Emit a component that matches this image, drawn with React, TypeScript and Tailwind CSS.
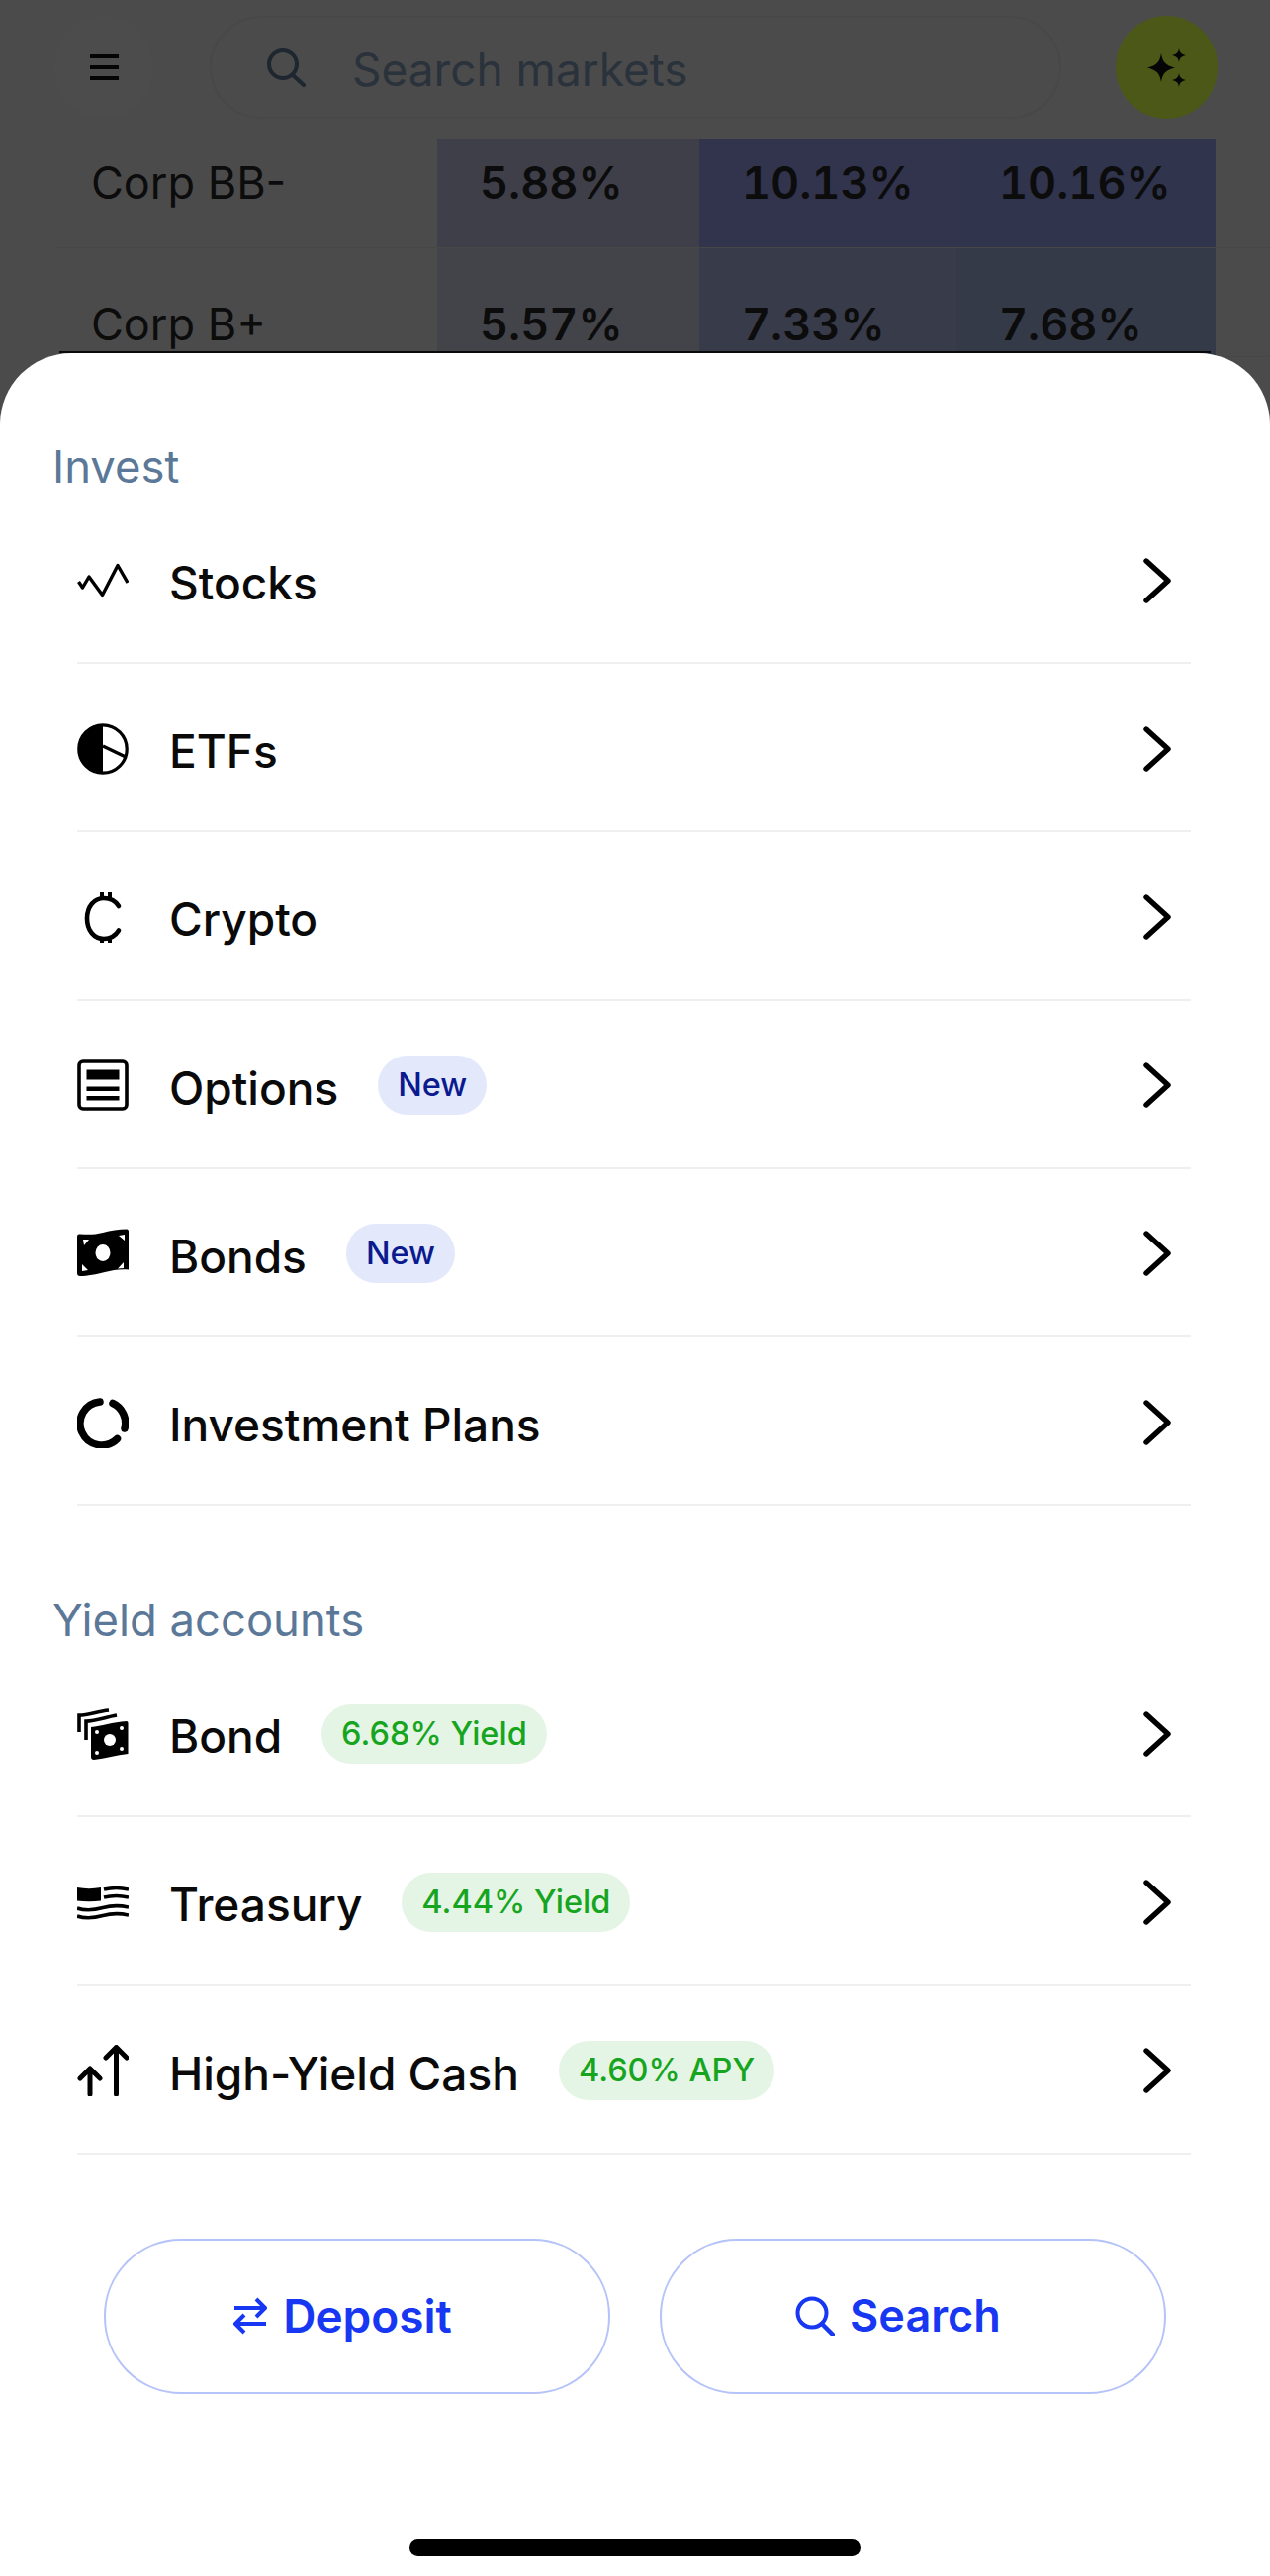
import type { ReactNode } from 'react';

type MenuRow = {
	label: string;
	icon: ReactNode;
	badge?: string;
	tone?: 'blue' | 'green';
};

function Icon({ children }: { children: ReactNode }) {
	return (
		<svg viewBox="0 0 52 52" className="h-[52px] w-[52px] shrink-0">
			{children}
		</svg>
	);
}

const stocksIcon = (
	<Icon>
		<polyline
			points="1.5,27 5.5,33 12,22 25.5,40.5 41,10.5 51,28"
			fill="none"
			stroke="#000"
			strokeWidth="3.4"
			strokeLinejoin="round"
		/>
	</Icon>
);

const etfsIcon = (
	<Icon>
		<circle cx="26" cy="26" r="24.2" fill="#fff" stroke="#000" strokeWidth="3.2" />
		<path d="M26 1.5a24.5 24.5 0 0 0 0 49Z" fill="#000" />
		<path d="M26 23 49 34" stroke="#000" strokeWidth="3.4" />
	</Icon>
);

const cryptoIcon = (
	<Icon>
		<path
			d="M42 15C38 8.5 33 7 27 7 17 7 10 15.5 10 27.5S17 48 27 48c6 0 11-2 15-8.5"
			fill="none"
			stroke="#000"
			strokeWidth="4.6"
			strokeLinecap="round"
		/>
		<path d="M25 1v6M33 1v6M25 48v6M33 48v6" stroke="#000" strokeWidth="4" />
	</Icon>
);

const optionsIcon = (
	<Icon>
		<rect x="2" y="2" width="48" height="48" rx="4" fill="none" stroke="#000" strokeWidth="3.6" />
		<rect x="9.5" y="10.5" width="33" height="10" fill="#000" />
		<rect x="9.5" y="27.5" width="33" height="4.5" fill="#000" />
		<rect x="9.5" y="37" width="33" height="4.5" fill="#000" />
	</Icon>
);

const bondsIcon = (
	<Icon>
		<path
			d="M0 9C0 7 1 6.500 3 6.500 12 7 18 7 26 5S42 1.500 50 1.500C51.500 1.500 52 2.500 52 4V42.500C44 41.500 36 43 28 45S10 49 3 49C1 49 0 48 0 46Z"
			fill="#000"
		/>
		<ellipse cx="26" cy="25.500" rx="7.500" ry="8.500" fill="#fff" />
		<path d="M6 12h6l-5 6ZM42 8l6-1v6ZM5 37l6 6-6 1ZM47 35v6l-6 .5Z" fill="#fff" />
	</Icon>
);

const plansIcon = (
	<Icon>
		<path
			d="M23 5A22 22 0 1 0 40.500 42.500"
			fill="none"
			stroke="#000"
			strokeWidth="7.500"
			strokeLinecap="round"
		/>
		<path d="M36 6.500A22 22 0 0 1 48 32" fill="none" stroke="#000" strokeWidth="7.500" strokeLinecap="round" />
	</Icon>
);

const stackedBondIcon = (
	<Icon>
		<path d="M2 24V7C12 7 20 3 32 2" fill="none" stroke="#000" strokeWidth="3.600" />
		<path d="M9 32V13C19 13 28 9 40 7" fill="none" stroke="#000" strokeWidth="3.600" />
		<path d="M14 19C24 18 36 14 50 13 51 13 51.500 14 51.500 15V46C40 47 28 51 17 52 15 52 14 51 14 49Z" fill="#000" />
		<circle cx="33" cy="32" r="6" fill="#fff" />
		<circle cx="20" cy="24" r="2" fill="#fff" />
		<circle cx="45" cy="20" r="2" fill="#fff" />
		<circle cx="20" cy="45" r="2" fill="#fff" />
		<circle cx="45" cy="41" r="2" fill="#fff" />
	</Icon>
);

const treasuryIcon = (
	<Icon>
		<path d="M0 11c8 1.500 16 1.500 24 0v13.500c-8 1-16 1-24 0Z" fill="#000" />
		<path
			d="M27 13c8-2 17-2 25 0M27 21c8-2 17-2 25 0M0 32c9 3 17 2 26-.5s17-2.500 26-.5M0 40c9 3 17 2 26-.5s17-2.500 26-.5"
			fill="none"
			stroke="#000"
			strokeWidth="3.600"
		/>
	</Icon>
);

const arrowsIcon = (
	<Icon>
		<path
			d="M13 50V25M3 34 13 24 23 34M39.500 50V3M29 13 39.500 2.500 50 13"
			fill="none"
			stroke="#000"
			strokeWidth="5"
			strokeLinecap="round"
			strokeLinejoin="round"
		/>
	</Icon>
);

const investRows: MenuRow[] = [
	{ label: 'Stocks', icon: stocksIcon },
	{ label: 'ETFs', icon: etfsIcon },
	{ label: 'Crypto', icon: cryptoIcon },
	{ label: 'Options', icon: optionsIcon, badge: 'New', tone: 'blue' },
	{ label: 'Bonds', icon: bondsIcon, badge: 'New', tone: 'blue' },
	{ label: 'Investment Plans', icon: plansIcon },
];

const yieldRows: MenuRow[] = [
	{ label: 'Bond', icon: stackedBondIcon, badge: '6.68% Yield', tone: 'green' },
	{ label: 'Treasury', icon: treasuryIcon, badge: '4.44% Yield', tone: 'green' },
	{ label: 'High-Yield Cash', icon: arrowsIcon, badge: '4.60% APY', tone: 'green' },
];

function Row({ label, icon, badge, tone }: MenuRow) {
	return (
		<div className="flex h-[170.2px] items-center border-b-2 border-[#efefef] pt-[3px]">
			<div className="mr-[41px]">{icon}</div>
			<span className="mt-[5px] text-[46px] leading-[52px] font-medium text-[#0a0a0a]">
				{label}
			</span>
			{badge && (
				<span
					className={
						tone === 'blue'
							? 'ml-[40px] rounded-full bg-[#e3e9fb] px-[20px] text-[32.5px] leading-[60px] font-medium text-[#0b1a8e]'
							: 'ml-[40px] rounded-full bg-[#e5f5e5] px-[20px] text-[32.5px] leading-[60px] font-medium text-[#17a51f]'
					}
				>
					{badge}
				</span>
			)}
			<svg viewBox="0 0 28 46" fill="none" className="mr-[20px] ml-auto h-[46px] w-[28px]">
				<path d="M3 3l22 20-22 20" stroke="#000" strokeWidth="5.400" strokeLinecap="round" strokeLinejoin="round" />
			</svg>
		</div>
	);
}

function MarketRow({
	name,
	values,
	fills,
	height,
	padding,
}: {
	name: string;
	values: string[];
	fills: string[];
	height: string;
	padding: string;
}) {
	return (
		<div className={`ml-[55px] flex ${height} border-b border-[#474747]`}>
			<div className={`w-[387px] pl-[37px] text-[45px] leading-[50px] text-[#0c0c0c] ${padding}`}>
				{name}
			</div>
			{values.map((value, i) => (
				<div
					key={value}
					className={`pl-[43px] text-[45px] leading-[50px] font-semibold text-[#0c0c0c] tabular-nums ${padding} ${i === 2 ? 'w-[262px]' : i === 0 ? 'w-[265px]' : 'w-[260px]'}`}
					style={{ backgroundColor: fills[i] }}
				>
					{value}
				</div>
			))}
		</div>
	);
}

function App() {
	return (
		<div className="relative h-[2604px] w-[1284px] overflow-hidden bg-[#4b4b4b] font-['Inter',sans-serif]">
			<header className="flex h-[141px] items-start pt-[16px] pr-[53px] pl-[55px]">
				<div className="flex h-[104px] w-[100px] items-center justify-center rounded-full bg-[#4c4c4c]">
					<svg viewBox="0 0 29 26" className="h-[26px] w-[29px]">
						<path d="M0 2h29M0 13h29M0 24h29" stroke="#050505" strokeWidth="4" />
					</svg>
				</div>
				<div className="ml-[57px] flex h-[104px] w-[861px] items-center rounded-full border-2 border-[#484848]">
					<svg viewBox="0 0 40 40" fill="none" className="ml-[55px] h-[40px] w-[40px]">
						<circle cx="17" cy="17" r="14" stroke="#1e2630" strokeWidth="4" />
						<path d="M27 28l11 10" stroke="#1e2630" strokeWidth="4" strokeLinecap="round" />
					</svg>
					<span className="mt-[4px] ml-[47px] text-[46px] leading-[52px] text-[#2a323c]">Search markets</span>
				</div>
				<div className="ml-[55px] flex h-[104px] w-[103px] items-center justify-center rounded-full bg-[#4c5818]">
					<svg viewBox="0 0 39 39" className="h-[39px] w-[39px]" fill="#050505">
						<path d="M14 5C15.500 13.500 18 17 28 19.500 18 22 15.500 25.500 14 34 12.500 25.500 10 22 0 19.500 10 17 12.500 13.500 14 5Z" />
						<path d="M32 0C32.800 4.200 34 5.800 39 7 34 8.200 32.800 9.800 32 14 31.200 9.800 30 8.200 25 7 30 5.800 31.200 4.200 32 0ZM32 25C32.800 29.200 34 30.800 39 32 34 33.200 32.800 34.800 32 39 31.200 34.800 30 33.200 25 32 30 30.800 31.200 29.200 32 25Z" />
					</svg>
				</div>
			</header>

			<MarketRow
				name="Corp BB-"
				values={['5.88%', '10.13%', '10.16%']}
				fills={['#3f3f4a', '#31344c', '#30344d']}
				height="h-[110px]"
				padding="pt-[19px]"
			/>
			<MarketRow
				name="Corp B+"
				values={['5.57%', '7.33%', '7.68%']}
				fills={['#43444a', '#383b49', '#353a49']}
				height="h-[110px]"
				padding="pt-[52px]"
			/>

			{/* bottom sheet sits over the dimmed market table */}
			<div className="absolute inset-x-0 top-[357px] bottom-0 flex flex-col rounded-t-[72px] bg-white pt-[86px] pl-[53px]">
				<div className="absolute inset-x-[60px] -top-[2px] h-[2px] bg-[#0a0a0a]" />
				<h2 className="text-[45.400px] leading-[58px] font-normal text-[#5b7898]">Invest</h2>
				<div className="mr-[80px] ml-[25px]">
					{investRows.map((row) => (
						<Row key={row.label} {...row} />
					))}
				</div>

				<h2 className="mt-[87px] text-[45.400px] leading-[58px] font-normal text-[#5b7898]">
					Yield accounts
				</h2>
				<div className="mr-[80px] ml-[25px]">
					{yieldRows.map((row) => (
						<Row key={row.label} {...row} />
					))}
				</div>

				<div className="mt-[85px] ml-[52px] flex gap-[50px]">
					<button
						type="button"
						className="flex h-[157px] w-[512px] items-center justify-center gap-[15px] rounded-[78px] border-2 border-[#b5c3f8] pr-[30px] text-[46px] font-semibold text-[#1737f2]"
					>
						<svg viewBox="0 0 36 38" fill="none" className="h-[38px] w-[36px]">
							<path
								d="M2 11h31M24 2l9 9-9 9M34 27H3M12 18l-9 9 9 9"
								stroke="#1737f2"
								strokeWidth="4"
								strokeLinejoin="round"
							/>
						</svg>
						Deposit
					</button>
					<button
						type="button"
						className="flex h-[157px] w-[512px] items-center justify-center gap-[15px] rounded-[78px] border-2 border-[#b5c3f8] pr-[30px] text-[45px] font-semibold text-[#1737f2]"
					>
						<svg viewBox="0 0 40 40" fill="none" className="h-[40px] w-[40px]">
							<circle cx="17" cy="17" r="14.500" stroke="#1737f2" strokeWidth="4" />
							<path d="M27 28l11 11" stroke="#1737f2" strokeWidth="4.500" strokeLinecap="round" />
						</svg>
						Search
					</button>
				</div>

				<div className="mt-[147px] ml-[361px] h-[17px] w-[456px] rounded-full bg-black" />
			</div>
		</div>
	);
}

export default App;
